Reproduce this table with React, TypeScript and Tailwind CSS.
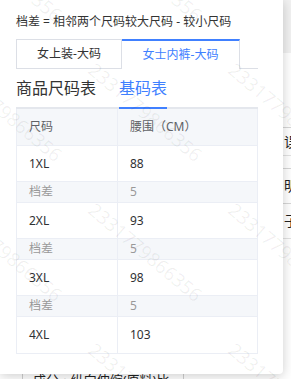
import React from "react";

const rows = [
  { size: "1XL", waist: "88" },
  { size: "2XL", waist: "93" },
  { size: "3XL", waist: "98" },
  { size: "4XL", waist: "103" },
];

const marks: { x: number; y: number }[] = [];
for (const y of [-80, 60, 200, 340]) {
  for (const x of [-43, 97, 237]) marks.push({ x, y });
}

export default function App() {
  return (
    <div className="relative w-[291px] h-[379px] overflow-hidden bg-white font-['Noto_Sans','Noto_Sans_CJK_SC',sans-serif]">
      {/* page behind the popup */}
      <div className="flex h-full flex-col">
        <div className="flex flex-1 flex-col pl-[283px] text-[14px] text-[#222]">
          <div className="h-[53px] bg-[#f1f1f1]"></div>
          <div className="h-[74px]"></div>
          <div className="flex h-[28px] items-center border-t border-[#d6d6d6] pl-[1px] leading-none">误</div>
          <div className="h-[13px] border-t border-[#e2e2e2]"></div>
          <div className="flex h-[35px] items-center border-t border-[#d6d6d6] pl-[1px] leading-none">明</div>
          <div className="flex h-[35px] items-center border-t border-[#d6d6d6] pl-[1px] leading-none">子</div>
          <div className="border-t border-[#e2e2e2]"></div>
        </div>
        <div className="flex h-[9px] text-[13px] leading-[20px] text-[#222]">
          <div className="w-[23px] border-r border-[#d0d0d0]"></div>
          <div className="w-[161px] overflow-hidden whitespace-nowrap border-r border-[#d0d0d0] pl-[10px]">成分 • 纵向伸缩(原料)比</div>
        </div>
      </div>

      {/* size chart popup */}
      <div className="absolute left-0 top-0 h-[374px] w-[283px] rounded-br-[4px] bg-white px-[16px] shadow-[0_2px_12px_rgba(0,0,0,0.2)]">
        <p className="pt-[13px] text-[12px] leading-[18px] text-[#333]">档差 = 相邻两个尺码较大尺码 - 较小尺码</p>

        <div className="mt-[8px] flex w-[242px] text-[12px]">
          <div className="flex h-[30px] w-[106px] items-center justify-center border border-[#dcdfe6] text-[#333]">女上装-大码</div>
          <div className="flex h-[30px] w-[118px] items-center justify-center border-r border-t-2 border-r-[#dcdfe6] border-t-[#4080ff] text-[#4080ff]">女士内裤-大码</div>
          <div className="flex-1 border-b border-[#dcdfe6]"></div>
        </div>

        <div className="flex w-[242px] gap-[23px] border-b-2 border-[#e4e7ed] text-[16px]">
          <div className="h-[38px] leading-[38px] text-[#333]">商品尺码表</div>
          <div className="-mb-[2px] h-[40px] border-b-2 border-[#4080ff] leading-[38px] text-[#4080ff]">基码表</div>
        </div>

        <div className="w-[242px] border-x border-b border-[#ebeef5] text-[12px]">
          <div className="flex h-[37px] border-b border-[#ebeef5] bg-[#f5f7fa] text-[#606266]">
            <div className="flex w-[101px] items-center border-r border-[#ebeef5] pl-[12px]">尺码</div>
            <div className="flex flex-1 items-center pl-[12px]">腰围（CM）</div>
          </div>
          {rows.map((r, i) => (
            <React.Fragment key={r.size}>
              {i > 0 && (
                <div className="flex h-[21px] border-b border-[#ebeef5] bg-[#f5f7fa] text-[#999]">
                  <div className="flex w-[101px] items-center border-r border-[#ebeef5] pl-[12px]">档差</div>
                  <div className="flex flex-1 items-center pl-[12px]">5</div>
                </div>
              )}
              <div className={`flex h-[36px] text-[#303133] ${i < rows.length - 1 ? "border-b border-[#ebeef5]" : ""}`}>
                <div className="flex w-[101px] items-center border-r border-[#ebeef5] pl-[12px]">{r.size}</div>
                <div className="flex flex-1 items-center pl-[12px]">{r.waist}</div>
              </div>
            </React.Fragment>
          ))}
        </div>
      </div>

      {/* watermark overlay */}
      <div className="pointer-events-none absolute inset-0">
        {marks.map((m, i) => (
          <span
            key={i}
            className="absolute origin-top-left rotate-[40deg] whitespace-nowrap text-[19px] leading-none text-black/[0.06]"
            style={{ left: m.x, top: m.y }}
          >
            2331779866356
          </span>
        ))}
      </div>
    </div>
  );
}
